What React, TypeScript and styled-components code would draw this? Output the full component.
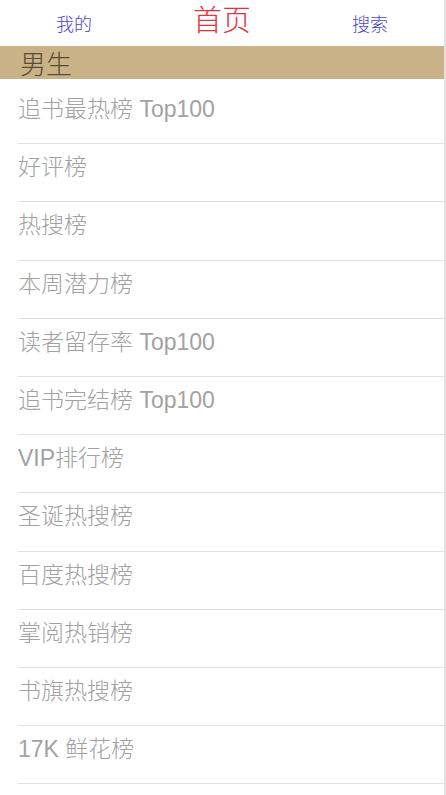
import React from "react";
import styled, { createGlobalStyle } from "styled-components";

const Global = createGlobalStyle`
  html, body { margin: 0; padding: 0; background: #fff; }
  * { box-sizing: border-box; }
`;

const Page = styled.div`
  width: 446px;
  min-height: 795px;
  border-right: 2px solid #e2e2e2;
  background: #fff;
  overflow: hidden;
`;

const Header = styled.header`
  display: grid;
  grid-template-columns: 1fr 1fr 1fr;
  align-items: center;
  height: 46px;
  font-family: "Liberation Serif", "Noto Sans CJK SC", serif;
`;

const NavLink = styled.a`
  justify-self: center;
  color: #4a46d0;
  font-size: 18px;
  font-weight: 300;
  text-decoration: none;
  padding-top: 0px;
`;

const Title = styled.h1`
  justify-self: center;
  margin: 0;
  color: #e8333d;
  font-size: 29px;
  font-weight: 300;
  line-height: 1;
  padding-bottom: 4px;
`;

const Band = styled.div`
  height: 33px;
  background: #c9b288;
  color: #5c4b33;
  font-family: "Noto Sans CJK SC", sans-serif;
  font-size: 26px;
  font-weight: 300;
  line-height: 33px;
  padding-left: 20px;
`;

const List = styled.ul`
  list-style: none;
  margin: 0;
  padding: 7px 0 0 18px;
`;

const Item = styled.li`
  height: 58.2px;
  border-bottom: 1px solid #e0e0e0;
  color: #a2a2a2;
  font-family: "Liberation Sans", "Noto Sans CJK SC", sans-serif;
  font-size: 23px;
  font-weight: 300;
  line-height: 46px;
`;

const items = [
  "追书最热榜 Top100",
  "好评榜",
  "热搜榜",
  "本周潜力榜",
  "读者留存率 Top100",
  "追书完结榜 Top100",
  "VIP排行榜",
  "圣诞热搜榜",
  "百度热搜榜",
  "掌阅热销榜",
  "书旗热搜榜",
  "17K 鲜花榜",
];

export default function App() {
  return (
    <>
      <Global />
      <Page>
        <Header>
          <NavLink href="#">我的</NavLink>
          <Title>首页</Title>
          <NavLink href="#">搜索</NavLink>
        </Header>
        <Band>男生</Band>
        <List>
          {items.map((t) => (
            <Item key={t}>{t}</Item>
          ))}
        </List>
      </Page>
    </>
  );
}
